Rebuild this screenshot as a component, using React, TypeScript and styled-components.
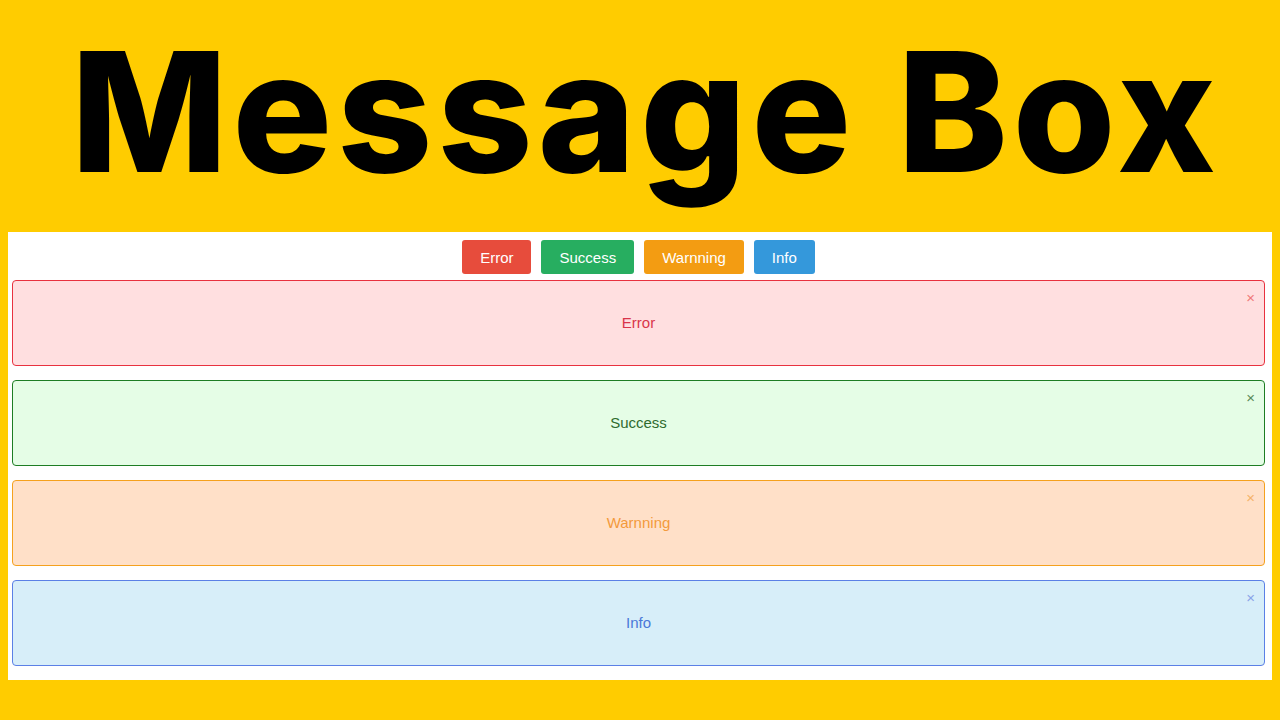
import React, { useState } from "react";
import styled, { createGlobalStyle } from "styled-components";

type Kind = "error" | "success" | "warning" | "info";

const palette: Record<
  Kind,
  { button: string; bg: string; border: string; text: string; close: string }
> = {
  error: {
    button: "#e74c3c",
    bg: "#ffdfe0",
    border: "#e8323f",
    text: "#d9354a",
    close: "#f07a7a",
  },
  success: {
    button: "#27ae60",
    bg: "#e5fde6",
    border: "#1e7d24",
    text: "#2f6b2f",
    close: "#5a8a5a",
  },
  warning: {
    button: "#f39c12",
    bg: "#ffe0c8",
    border: "#f5a11e",
    text: "#f39a3c",
    close: "#f5b36a",
  },
  info: {
    button: "#3498db",
    bg: "#d7eef9",
    border: "#5b80e6",
    text: "#4a78d8",
    close: "#8aa4e8",
  },
};

const labels: Record<Kind, string> = {
  error: "Error",
  success: "Success",
  warning: "Warnning",
  info: "Info",
};

const kinds: Kind[] = ["error", "success", "warning", "info"];

const GlobalStyle = createGlobalStyle`
  html, body {
    margin: 0;
    padding: 0;
    background: #ffcc00;
  }
  body {
    font-family: "Liberation Sans", Arial, sans-serif;
  }
`;

function App() {
  const [visible, setVisible] = useState<Kind[]>(kinds);

  function show(kind: Kind) {
    if (!visible.includes(kind)) {
      setVisible(kinds.filter((k) => k === kind || visible.includes(k)));
    }
  }

  function hide(kind: Kind) {
    setVisible(visible.filter((k) => k !== kind));
  }

  return (
    <Page>
      <GlobalStyle />
      <Title>Message Box</Title>
      <Panel>
        <Toolbar>
          {kinds.map((kind) => (
            <ToggleButton key={kind} $kind={kind} onClick={() => show(kind)}>
              {labels[kind]}
            </ToggleButton>
          ))}
        </Toolbar>
        <List>
          {visible.map((kind) => (
            <Message key={kind} $kind={kind}>
              {labels[kind]}
              <CloseButton $kind={kind} onClick={() => hide(kind)}>
                ×
              </CloseButton>
            </Message>
          ))}
        </List>
      </Panel>
    </Page>
  );
}

const Page = styled.div`
  width: 1280px;
  height: 720px;
  display: flex;
  flex-direction: column;
  align-items: center;
  overflow: hidden;
`;

const Title = styled.h1`
  margin: 0;
  height: 232px;
  padding-left: 12px;
  font-family: Inter, "Noto Sans", sans-serif;
  font-weight: 800;
  font-size: 166px;
  line-height: 224px;
  letter-spacing: 5px;
  color: #000;
  white-space: nowrap;
`;

const Panel = styled.div`
  width: 1264px;
  background: #fff;
  padding: 8px 7px 14px 4px;
  box-sizing: border-box;
  display: flex;
  flex-direction: column;
  gap: 6px;
`;

const Toolbar = styled.div`
  display: flex;
  justify-content: center;
  gap: 10px;
`;

const ToggleButton = styled.button<{ $kind: Kind }>`
  height: 34px;
  padding: 0 18px;
  border: none;
  border-radius: 3px;
  background: ${(p) => palette[p.$kind].button};
  color: #fff;
  font-family: "Liberation Sans", Arial, sans-serif;
  font-size: 15px;
  cursor: pointer;
`;

const List = styled.div`
  display: flex;
  flex-direction: column;
  gap: 14px;
`;

const Message = styled.div<{ $kind: Kind }>`
  position: relative;
  height: 86px;
  box-sizing: border-box;
  display: flex;
  align-items: center;
  justify-content: center;
  padding-bottom: 2px;
  background: ${(p) => palette[p.$kind].bg};
  border: 1px solid ${(p) => palette[p.$kind].border};
  border-radius: 4px;
  color: ${(p) => palette[p.$kind].text};
  font-size: 15px;
`;

const CloseButton = styled.button<{ $kind: Kind }>`
  position: absolute;
  top: 8px;
  right: 9px;
  padding: 0;
  border: none;
  background: none;
  color: ${(p) => palette[p.$kind].close};
  font-family: "Liberation Sans", Arial, sans-serif;
  font-size: 15px;
  line-height: 18px;
  cursor: pointer;
`;

export default App;
